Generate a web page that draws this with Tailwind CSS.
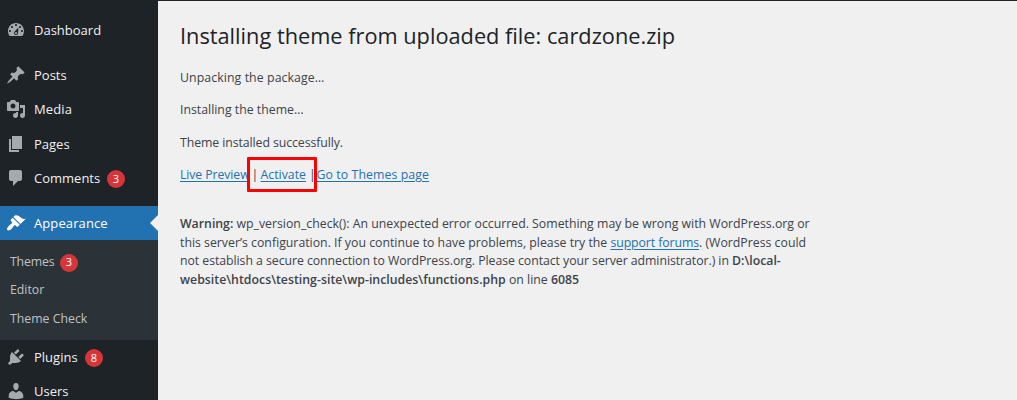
<!DOCTYPE html>
<html lang="en">
<head>
<meta charset="utf-8">
<title>Install Themes</title>
<script src="https://cdn.jsdelivr.net/npm/@tailwindcss/browser@4"></script>
</head>
<body class="h-[400px] overflow-hidden border-t border-[#1d2327] bg-[#f0f0f1] font-['Open_Sans','Noto_Sans',sans-serif] text-[12.3px] text-[#3c434a]">
<div class="flex h-[399px] overflow-hidden">
  <nav class="h-full w-[158px] shrink-0 overflow-hidden bg-[#1d2327] pt-3 text-[13px] text-[#f0f0f1]">
    <a class="flex h-[34px] items-center gap-2 pl-1.5">
      <svg class="size-5 shrink-0 fill-[#a7aaad]" viewBox="0 0 20 20"><path d="M3.76 16h12.48c1.1-1.37 1.76-3.11 1.76-5 0-4.42-3.58-8-8-8s-8 3.58-8 8c0 1.89.66 3.63 1.76 5zM10 4c.55 0 1 .45 1 1s-.45 1-1 1-1-.45-1-1 .45-1 1-1zM6 6c.55 0 1 .45 1 1s-.45 1-1 1-1-.45-1-1 .45-1 1-1zm8 0c.55 0 1 .45 1 1s-.45 1-1 1-1-.45-1-1 .45-1 1-1zm-1.63 1.55L12 13c0 1.1-.9 2-2 2s-2-.9-2-2c0-.57.24-1.08.63-1.45zM4 10c.55 0 1 .45 1 1s-.45 1-1 1-1-.45-1-1 .45-1 1-1zm12 0c.55 0 1 .45 1 1s-.45 1-1 1-1-.45-1-1 .45-1 1-1zm-5 3c0-.55-.45-1-1-1s-1 .45-1 1 .45 1 1 1 1-.45 1-1z"/></svg>
      <span class="pt-0.5">Dashboard</span>
    </a>
    <a class="mt-[11px] flex h-[34px] items-center gap-2 pl-1.5">
      <svg class="size-5 shrink-0 fill-[#a7aaad]" viewBox="0 0 20 20"><path d="M10.44 3.02l1.82-1.82 6.36 6.35-1.83 1.82c-1.05-.68-2.48-.57-3.41.36l-.75.75c-.92.93-1.04 2.35-.35 3.41l-1.83 1.82-2.41-2.41-2.8 2.79c-.42.42-3.38 2.71-3.8 2.29s1.86-3.39 2.28-3.81l2.79-2.79L4.1 9.36l1.83-1.82c1.05.69 2.48.57 3.4-.36l.75-.75c.93-.92 1.05-2.35.36-3.41z"/></svg>
      <span class="pt-0.5">Posts</span>
    </a>
    <a class="flex h-[34px] items-center gap-2 pl-1.5">
      <svg class="size-5 shrink-0 fill-[#a7aaad]" viewBox="0 0 20 20"><path fill-rule="evenodd" d="M13 11V4c0-.55-.45-1-1-1h-1.67L9 1H5L3.67 3H2c-.55 0-1 .45-1 1v7c0 .55.45 1 1 1h10c.55 0 1-.45 1-1zM7 4.5c1.38 0 2.5 1.12 2.5 2.5S8.38 9.5 7 9.5 4.5 8.38 4.5 7 5.62 4.5 7 4.5zM14 6h5v10.5c0 1.38-1.12 2.5-2.5 2.5S14 17.88 14 16.5s1.12-2.5 2.5-2.5c.17 0 .34.02.5.05V9h-3V6zm-4 8.05V13h2v3.5c0 1.38-1.12 2.5-2.5 2.5S7 17.88 7 16.5 8.12 14 9.5 14c.17 0 .34.02.5.05z"/></svg>
      <span class="pt-0.5 tracking-[0.1px]">Media</span>
    </a>
    <a class="flex h-[35px] items-center gap-2 pl-1.5">
      <svg class="size-5 shrink-0 fill-[#a7aaad]" viewBox="0 0 20 20"><path d="M6 15V2h10v13H6zm-1 1h8v2H3V5h2v11z"/></svg>
      <span class="pt-0.5">Pages</span>
    </a>
    <a class="flex h-[34px] items-center gap-2 pl-1.5">
      <svg class="size-5 shrink-0 fill-[#a7aaad]" viewBox="0 0 20 20"><path d="M5 2h9c1.1 0 2 .9 2 2v7c0 1.1-.9 2-2 2h-2l-5 5v-5H5c-1.1 0-2-.9-2-2V4c0-1.1.9-2 2-2z"/></svg>
      <span class="w-[65px] pt-0.5 whitespace-nowrap">Comments</span>
      <span class="mt-0.5 flex size-[18px] items-center justify-center rounded-full bg-[#d63638] text-[11px] font-medium text-white">3</span>
    </a>
    <a class="mt-[11px] flex h-[34px] items-center gap-2 bg-[#2271b1] pl-1.5 text-white">
      <svg class="size-5 shrink-0 fill-white" viewBox="0 0 20 20"><path d="M14.48 11.06L7.41 3.99l1.5-1.5c.5-.56 2.3-.47 3.51.32 1.21.8 1.43 1.28 2.91 2.1 1.18.64 2.45 1.26 4.45.85zm-.71.71L6.7 4.7 4.93 6.47c-.39.39-.39 1.02 0 1.41l1.06 1.06c.39.39.39 1.03 0 1.42-.6.6-1.43 1.11-2.21 1.69-.35.26-.7.53-1.01.84C1.43 14.23.4 16.08 1.4 17.07c.99 1 2.84-.03 4.18-1.36.31-.31.58-.66.85-1.02.57-.78 1.08-1.61 1.69-2.21.39-.39 1.02-.39 1.41 0l1.06 1.06c.39.39 1.02.39 1.41 0z"/></svg>
      <span class="pt-0.5 tracking-[0.1px]">Appearance</span>
      <svg class="ml-auto h-4 w-2 fill-[#f0f0f1]" viewBox="0 0 8 16"><path d="M8 0v16L0 8z"/></svg>
    </a>
    <div class="flex h-[100px] flex-col bg-[#2c3338] pt-2 pl-2.5 text-[12.3px] text-[#bfc2c5]">
      <a class="flex h-[29px] items-center gap-1.5"><span class="w-[44px] whitespace-nowrap tracking-[-0.15px]">Themes</span><span class="flex size-[18px] items-center justify-center rounded-full bg-[#d63638] text-[11px] font-medium text-white">3</span></a>
      <a class="flex h-[27px] items-center">Editor</a>
      <a class="flex h-[30px] items-center">Theme Check</a>
    </div>
    <a class="flex h-[34px] items-center gap-2 pl-1.5">
      <svg class="size-5 shrink-0 fill-[#a7aaad]" viewBox="0 0 20 20"><path d="M13.11 4.36L9.87 7.6 8 5.73l3.24-3.24c.35-.34 1.05-.2 1.56.32.52.51.66 1.21.31 1.55zm-8 1.77l.91-1.12 9.01 9.01-1.19.84c-.71.71-2.63 1.16-3.82 1.16H6.14L4.9 17.26c-.59.59-1.54.59-2.12 0-.59-.58-.59-1.53 0-2.12l1.24-1.24v-3.88c0-1.13.4-3.19 1.09-3.89zm7.26 3.97l3.24-3.24c.34-.35 1.04-.21 1.55.31.52.51.66 1.21.31 1.55l-3.24 3.25z"/></svg>
      <span class="w-[43px] pt-0.5 whitespace-nowrap">Plugins</span>
      <span class="mt-0.5 flex size-[18px] items-center justify-center rounded-full bg-[#d63638] text-[11px] font-medium text-white">8</span>
    </a>
    <a class="flex h-[34px] items-center gap-2 pl-1.5">
      <svg class="size-5 shrink-0 fill-[#a7aaad]" viewBox="0 0 20 20"><path d="M10 9.25c-2.27 0-2.73-3.44-2.73-3.44C7 4.02 7.82 2 9.97 2c2.16 0 2.98 2.02 2.71 3.81 0 0-.41 3.44-2.68 3.44zm0 2.57L12.72 10c2.39 0 4.52 2.33 4.52 4.53v2.49s-3.65 1.13-7.24 1.13c-3.65 0-7.24-1.13-7.24-1.13v-2.49c0-2.25 1.94-4.48 4.47-4.48z"/></svg>
      <span class="pt-0.5">Users</span>
    </a>
  </nav>
  <main class="flex-1 whitespace-nowrap pt-5 pl-[22px]">
    <h1 class="h-[30px] text-[21.75px] leading-[30px] text-[#1d2327]">Installing theme from uploaded file: cardzone.zip</h1>
    <p class="mt-[17px] leading-[19px] tracking-[0.09px]">Unpacking the package…</p>
    <p class="mt-[13px] leading-[19px]">Installing the theme…</p>
    <p class="mt-[14px] leading-[19px] tracking-[-0.08px]">Theme installed successfully.</p>
    <p class="mt-[13px] flex leading-[19px]">
      <a class="w-[71.5px] tracking-[-0.1px] text-[#2271b1] underline underline-offset-2">Live Preview</a>
      <span class="w-[9px]">|</span>
      <span class="relative w-[48.5px]"><a class="text-[#2271b1] underline underline-offset-2">Activate</a><span class="absolute -top-[8px] -left-[13.5px] h-[35px] w-[70px] rounded-[1px] border-3 border-[#fe0000]"></span></span>
      <span class="w-[7.5px]">|</span>
      <a class="tracking-[0.09px] text-[#2271b1] underline underline-offset-2">Go to Themes page</a>
    </p>
    <p class="mt-[31px] leading-[18.5px]">
      <b class="inline-block w-[56.5px] font-semibold">Warning:</b>wp_version_check(): An unexpected error occurred. Something may be wrong with WordPress.org or<br>
      this server’s configuration. If you continue to have problems, please try the <a class="tracking-[-0.09px] text-[#2271b1] underline underline-offset-2">support forums</a>. (WordPress could<br>
      <span class="tracking-[-0.055px]">not establish a secure connection to WordPress.org. Please contact your server administrator.) in </span><b class="font-semibold">D:\local-</b><br>
      <b class="font-semibold tracking-[0.02px]">website\htdocs\testing-site\wp-includes\functions.php</b> on line <b class="font-semibold">6085</b>
    </p>
  </main>
</div>
</body>
</html>
